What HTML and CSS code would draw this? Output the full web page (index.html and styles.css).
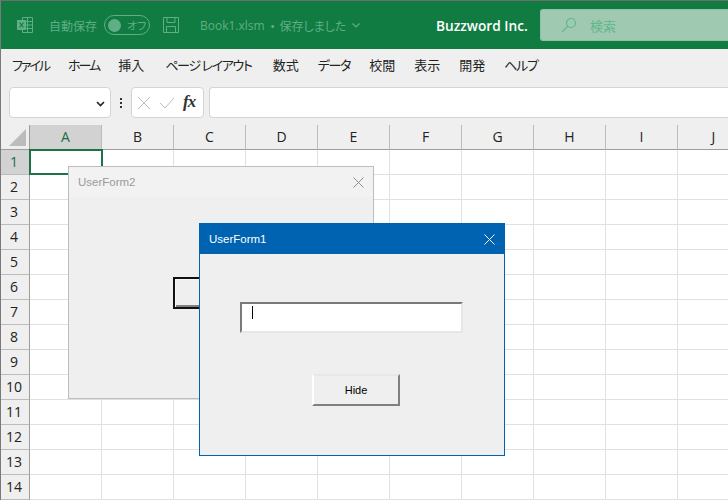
FILE: index.html
```html
<!DOCTYPE html>
<html lang="ja">
<head>
<meta charset="utf-8">
<title>Excel</title>
<link rel="stylesheet" href="styles.css">
</head>
<body>
<div class="app">
  <header class="titlebar">
    <svg class="xl" width="16" height="16" viewBox="0 0 16 16" fill="none" stroke="#5fae86" stroke-width="1"><path d="M5.500 .5H15.500V15.500H5.500V13M5.500 3V.5M10.500 .5V15.500M5.500 4.500H15.500M5.500 8H15.500M5.500 11.500H15.500"/><rect x="0" y="3" width="9" height="10" fill="#5fae86" stroke="none"/><path d="M2.500 5.500L6.500 10.500M6.500 5.500L2.500 10.500" stroke="#107c41" stroke-width="1.200"/></svg>
    <span class="autosave">自動保存</span>
    <span class="toggle"><i class="knob"></i><b>オフ</b></span>
    <svg class="save" width="16" height="16" viewBox="0 0 16 16" fill="none" stroke="#5fae86"><path d="M.5 .5H15.500V15.500H.5ZM4 .5V5.500H12V.5M3.500 15.500V9.500H12.500V15.500"/></svg>
    <span class="docname">Book1.xlsm</span>
    <span class="dot">•</span>
    <span class="saved">保存しました</span>
    <svg class="caret" width="8" height="5" viewBox="0 0 8 5" fill="none" stroke="#5fae86" stroke-width="1.200"><path d="M.5 .5L4 4L7.500 .5"/></svg>
    <span class="company">Buzzword Inc.</span>
    <div class="search">
      <svg width="16" height="16" viewBox="0 0 16 16" fill="none" stroke="#5fb88c" stroke-width="1.200"><circle cx="10" cy="6" r="4.500"/><path d="M6.800 9.200L1 15"/></svg>
      <span>検索</span>
    </div>
  </header>
  <nav class="menu">
    <span class="tight">ファイル</span><span class="tight">ホーム</span><span class="wide">挿入</span><span class="snug wide">ページ レイアウト</span><span>数式</span><span class="snug">データ</span><span>校閲</span><span>表示</span><span>開発</span><span class="snug">ヘルプ</span>
  </nav>
  <div class="formula">
    <div class="namebox">
      <svg width="9" height="6" viewBox="0 0 9 6" fill="none" stroke="#222" stroke-width="1.600"><path d="M1 1L4.500 4.500L8 1"/></svg>
    </div>
    <div class="grip"><i></i><i></i><i></i></div>
    <div class="fxbox">
      <svg width="14" height="14" viewBox="0 0 14 14" fill="none" stroke="#bdbdbd" stroke-width="1"><path d="M1 1L13 13M13 1L1 13"/></svg>
      <svg width="16" height="12" viewBox="0 0 16 12" fill="none" stroke="#bdbdbd" stroke-width="1"><path d="M1 6L6 11L15 1"/></svg>
      <span class="fx">fx</span>
    </div>
    <div class="input"></div>
  </div>
  <main class="sheet" id="sheet">
    <div class="corner"><svg width="17" height="17" viewBox="0 0 17 17"><path d="M17 0V17H0Z" fill="#bcbcbc"/></svg></div>
    <div class="colhead active">A</div><div class="colhead">B</div><div class="colhead">C</div><div class="colhead">D</div><div class="colhead">E</div><div class="colhead">F</div><div class="colhead">G</div><div class="colhead">H</div><div class="colhead">I</div><div class="colhead">J</div>
  </main>
  <div class="selected"></div>
  <section class="form form2">
    <div class="form-title"><span>UserForm2</span>
      <svg width="11" height="11" viewBox="0 0 11 11" fill="none" stroke="#8f8f8f"><path d="M.5 .5L10.500 10.500M10.500 .5L.5 10.500"/></svg>
    </div>
    <div class="ghost-btn"></div>
  </section>
  <section class="form form1">
    <div class="form-title"><span>UserForm1</span>
      <svg width="11" height="11" viewBox="0 0 11 11" fill="none" stroke="#fff"><path d="M.5 .5L10.500 10.500M10.500 .5L.5 10.500"/></svg>
    </div>
    <div class="form-body">
      <div class="textbox"><i class="cursor"></i></div>
      <div class="hide-btn">Hide</div>
    </div>
  </section>
</div>
<script src="sheet.js"></script>
</body>
</html>
```

FILE: sheet.js
```js
var sheet = document.getElementById('sheet');
for (var r = 1; r <= 14; r++) {
  var h = document.createElement('div');
  h.className = 'rowhead' + (r === 1 ? ' active' : '');
  h.textContent = r;
  sheet.appendChild(h);
  for (var c = 0; c < 10; c++) {
    var d = document.createElement('div');
    d.className = 'cell';
    sheet.appendChild(d);
  }
}
```

FILE: styles.css
```css
* { box-sizing: border-box; }
html, body { margin: 0; padding: 0; width: 728px; height: 500px; overflow: hidden; background: #fff; }
body { font-family: "Noto Sans CJK JP", "Liberation Sans", sans-serif; }
.app { position: relative; width: 728px; height: 500px; overflow: hidden; border-left: 1px solid #7a7a7a; border-top: 1px solid #6e6e6e; }

.titlebar { height: 48px; background: #107c41; display: flex; align-items: center; color: #5fae86; font-size: 12px; padding-left: 16px; white-space: nowrap; }
.xl { margin-right: 16px; }
.autosave { width: 48px; }
.toggle { margin-left: 7px; width: 46px; height: 20px; border: 1px solid #5fae86; border-radius: 10px; display: flex; align-items: center; padding-left: 3px; }
.knob { width: 13px; height: 13px; border-radius: 50%; background: #5fae86; }
.toggle b { font-weight: 400; font-size: 11px; margin-left: 6px; font-feature-settings: "palt"; }
.save { margin-left: 13px; }
.docname { margin-left: 21px; font-family: "Open Sans", sans-serif; font-size: 12px; }
.dot { margin-left: 6px; font-size: 11px; }
.saved { margin-left: 5px; font-size: 12px; font-feature-settings: "palt"; }
.caret { margin-left: 6px; }
.company { margin-left: auto; width: 104px; font-family: "Open Sans", sans-serif; font-size: 13.700px; font-weight: 600; color: #fff; }
.search { width: 188px; height: 32px; background: #9fc9b1; border: 1px solid #8fc0a5; border-right: 0; border-radius: 3px 0 0 3px; display: flex; align-items: center; gap: 13px; padding-left: 20px; color: #5fb88c; font-size: 13px; flex: none; }

.menu { height: 38px; background: #efefef; display: flex; align-items: center; font-size: 13px; color: #222; padding: 0 0 8px 11px; white-space: nowrap; font-feature-settings: "palt"; }
.menu span { margin-right: 19px; }
.menu .wide { margin-right: 21px; }
.menu .tight { letter-spacing: -2px; }
.menu .snug { letter-spacing: -1.300px; }

.formula { height: 38px; background: #efefef; display: flex; align-items: flex-start; padding-left: 8px; }
.namebox { width: 102px; height: 31px; background: #fff; border: 1px solid #d4d4d4; border-radius: 4px; display: flex; align-items: center; justify-content: flex-end; padding: 2px 5px 0 0; }
.grip { width: 20px; height: 31px; display: flex; flex-direction: column; align-items: center; justify-content: center; gap: 2px; }
.grip i { width: 2px; height: 2px; background: #333; }
.fxbox { width: 73px; height: 31px; background: #fff; border: 1px solid #d4d4d4; border-radius: 4px; display: flex; align-items: center; padding-left: 5px; gap: 8px; }
.fx { font-family: "Liberation Serif", serif; font-style: italic; font-weight: 700; font-size: 17px; color: #333; letter-spacing: -1px; margin-top: -2px; }
.input { flex: 1; height: 31px; margin-left: 5px; background: #fff; border: 1px solid #d4d4d4; border-right: 0; border-radius: 4px 0 0 4px; }

.sheet { display: grid; grid-template-columns: 29px repeat(10, 72px); grid-template-rows: 25px repeat(14, 25px); background: #fff; height: 376px; font-family: "Open Sans", sans-serif; font-size: 14px; color: #222; }
.corner { background: #efefef; border-right: 1px solid #9d9d9d; border-bottom: 1px solid #9d9d9d; display: flex; align-items: flex-end; justify-content: flex-end; padding: 0 3px 3px 0; }
.colhead { background: #efefef; border-right: 1px solid #bcbcbc; border-bottom: 1px solid #9d9d9d; display: flex; align-items: center; justify-content: center; padding-bottom: 2px; }
.colhead.active { background: #d2d2d2; color: #1d6b43; border-bottom-color: #8a8a8a; }
.rowhead { background: #efefef; border-right: 1px solid #9d9d9d; border-bottom: 1px solid #bcbcbc; display: flex; align-items: center; justify-content: center; padding: 0 2px 2px 0; }
.rowhead.active { background: #d2d2d2; color: #1d6b43; }
.cell { border-right: 1px solid #e0e0e0; border-bottom: 1px solid #e0e0e0; }

.selected { position: absolute; left: 28px; top: 148px; width: 74px; height: 26px; border: 2px solid #1f7246; }

.form { position: absolute; background: #efefef; }
.form-title { display: flex; align-items: center; justify-content: space-between; font-family: "Liberation Sans", sans-serif; font-size: 11.500px; }
.form2 { left: 67px; top: 165px; width: 306px; height: 233px; border: 1px solid #bdbdbd; }
.form2 .form-title { height: 30px; background: #f2f2f2; color: #9a9a9a; padding: 0 9px; }
.ghost-btn { position: absolute; left: 104px; top: 110px; width: 60px; height: 32px; background: #efefef; border: 2px solid #111; box-shadow: inset 1px 1px 0 #f8f8f8, inset -1px -2px 0 #808080; }
.form1 { left: 198px; top: 222px; width: 306px; height: 233px; border: 1px solid #0063b1; }
.form1 .form-title { height: 30px; background: #0063b1; color: #fff; padding: 0 9px; }
.form-body { position: relative; display: flex; flex-direction: column; align-items: flex-start; padding: 48px 0 0 40px; }
.textbox { width: 223px; height: 31px; background: #fff; border: 2px solid #e6e6e6; border-top-color: #7a7a7a; border-left-color: #7a7a7a; padding: 2px 0 0 10px; }
.cursor { display: block; width: 1px; height: 13px; background: #000; }
.hide-btn { margin: 41px 0 0 72px; width: 88px; height: 32px; background: #efefef; border: 2px solid #808080; border-top-color: #e8e8e8; border-left-color: #fff; display: flex; align-items: center; justify-content: center; font-family: "Liberation Sans", sans-serif; font-size: 11px; color: #000; }
```
